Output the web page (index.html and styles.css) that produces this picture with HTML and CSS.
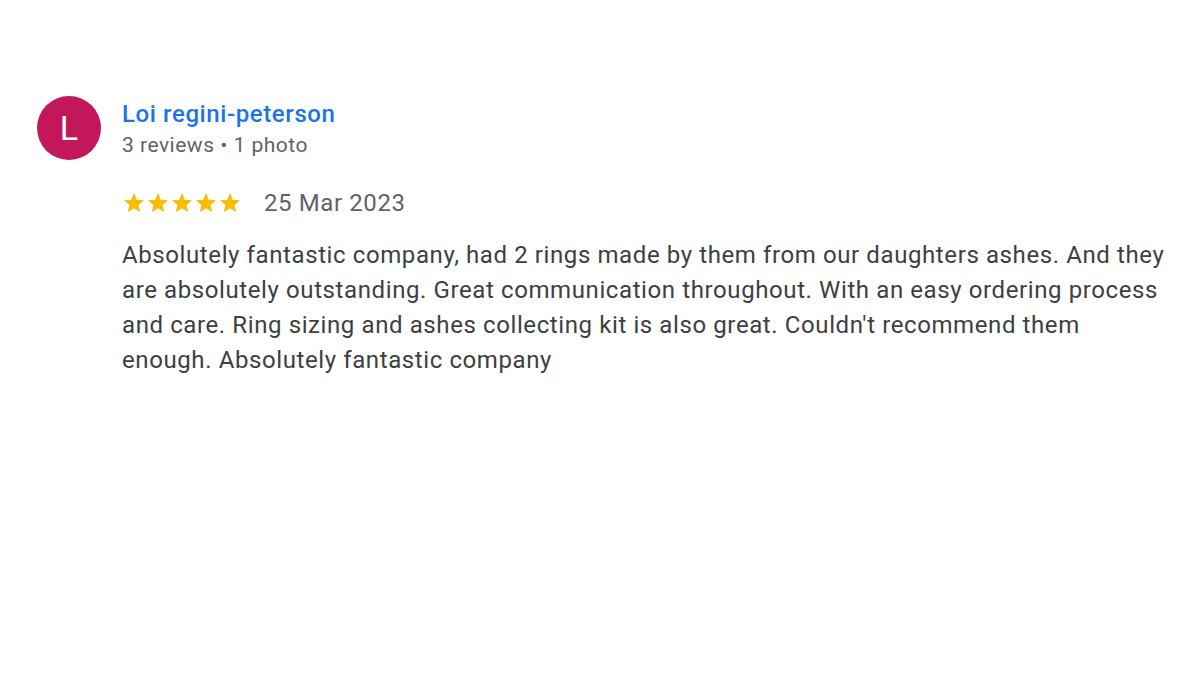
FILE: index.html
```html
<!DOCTYPE html>
<html>
<head>
<meta charset="utf-8">
<link rel="stylesheet" href="styles.css">
</head>
<body>
<div class="review">
  <div class="header">
    <div class="avatar">L</div>
    <div class="who">
      <div class="name">Loi regini-peterson</div>
      <div class="meta">3 reviews • 1 photo</div>
    </div>
  </div>
  <div class="content">
    <div class="rating">
      <div class="stars">
        <svg viewBox="0 0 24 24" class="star"><path d="M12 17.27L18.18 21l-1.64-7.03L22 9.24l-7.19-.61L12 2 9.19 8.63 2 9.24l5.46 4.73L5.82 21z"/></svg>
        <svg viewBox="0 0 24 24" class="star"><path d="M12 17.27L18.18 21l-1.64-7.03L22 9.24l-7.19-.61L12 2 9.19 8.63 2 9.24l5.46 4.73L5.82 21z"/></svg>
        <svg viewBox="0 0 24 24" class="star"><path d="M12 17.27L18.18 21l-1.64-7.03L22 9.24l-7.19-.61L12 2 9.19 8.63 2 9.24l5.46 4.73L5.82 21z"/></svg>
        <svg viewBox="0 0 24 24" class="star"><path d="M12 17.27L18.18 21l-1.64-7.03L22 9.24l-7.19-.61L12 2 9.19 8.63 2 9.24l5.46 4.73L5.82 21z"/></svg>
        <svg viewBox="0 0 24 24" class="star"><path d="M12 17.27L18.18 21l-1.64-7.03L22 9.24l-7.19-.61L12 2 9.19 8.63 2 9.24l5.46 4.73L5.82 21z"/></svg>
      </div>
      <span class="date">25 Mar 2023</span>
    </div>
    <p class="text">Absolutely fantastic company, had 2 rings made by them from our daughters ashes. And they are absolutely outstanding. Great communication throughout. With an easy ordering process and care. Ring sizing and ashes collecting kit is also great. Couldn't recommend them enough. Absolutely fantastic company</p>
  </div>
</div>
</body>
</html>
```

FILE: styles.css
```css
html, body {
  margin: 0;
  padding: 0;
  background: #ffffff;
}
body {
  font-family: Roboto, "Liberation Sans", Arial, sans-serif;
  width: 1200px;
  height: 675px;
  overflow: hidden;
}
.review {
  padding: 96px 30px 0 37px;
}
.header {
  display: flex;
  align-items: flex-start;
  gap: 21px;
}
.avatar {
  width: 64px;
  height: 64px;
  border-radius: 50%;
  background: #c2185b;
  color: #ffffff;
  font-size: 34px;
  display: flex;
  align-items: center;
  justify-content: center;
  flex-shrink: 0;
}
.who {
  padding-top: 2px;
}
.name {
  color: #1a73e8;
  font-size: 24px;
  font-weight: 500;
  line-height: 32px;
  letter-spacing: 0.6px;
}
.meta {
  color: #5f6368;
  font-size: 21px;
  line-height: 30px;
  letter-spacing: 0.5px;
}
.content {
  padding-left: 85px;
}
.rating {
  display: flex;
  align-items: center;
  gap: 22px;
  margin-top: 25px;
  height: 36px;
}
.stars {
  display: flex;
  gap: 0;
}
.star {
  width: 24px;
  height: 24px;
  fill: #fbbc04;
}
.date {
  color: #5f6368;
  font-size: 24px;
  letter-spacing: 0.6px;
}
.text {
  margin: 17px 0 0 0;
  color: #3c4043;
  font-size: 24px;
  line-height: 35px;
  letter-spacing: 0.6px;
}
```
